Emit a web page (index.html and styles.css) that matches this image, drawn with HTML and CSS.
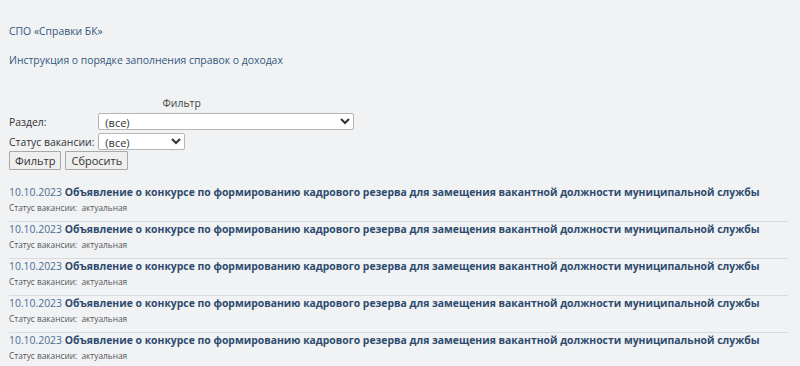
FILE: index.html
```html
<!DOCTYPE html>
<html lang="ru">
<head>
    <meta charset="UTF-8">
    <title>Вакансии</title>
    <link rel="stylesheet" href="styles.css">
</head>
<body>
    <p class="crumb">СПО «Справки БК»</p>
    <p class="crumb">Инструкция о порядке заполнения справок о доходах</p>

    <form class="filter">
        <table>
            <caption>Фильтр</caption>
            <tr>
                <td class="lbl">Раздел:</td>
                <td><select class="wide"><option>(все)</option></select></td>
            </tr>
            <tr class="last">
                <td class="lbl">Статус вакансии:</td>
                <td><select class="narrow"><option>(все)</option></select></td>
            </tr>
        </table>
        <div class="buttons">
            <button type="button">Фильтр</button>
            <button type="button">Сбросить</button>
        </div>
    </form>

    <div class="news">
        <div class="item">
            <div class="head"><span class="date">10.10.2023</span> <a class="title">Объявление о конкурсе по формированию кадрового резерва для замещения вакантной должности муниципальной службы</a></div>
            <div class="status">Статус вакансии:&nbsp; актуальная</div>
        </div>
        <div class="item">
            <div class="head"><span class="date">10.10.2023</span> <a class="title">Объявление о конкурсе по формированию кадрового резерва для замещения вакантной должности муниципальной службы</a></div>
            <div class="status">Статус вакансии:&nbsp; актуальная</div>
        </div>
        <div class="item">
            <div class="head"><span class="date">10.10.2023</span> <a class="title">Объявление о конкурсе по формированию кадрового резерва для замещения вакантной должности муниципальной службы</a></div>
            <div class="status">Статус вакансии:&nbsp; актуальная</div>
        </div>
        <div class="item">
            <div class="head"><span class="date">10.10.2023</span> <a class="title">Объявление о конкурсе по формированию кадрового резерва для замещения вакантной должности муниципальной службы</a></div>
            <div class="status">Статус вакансии:&nbsp; актуальная</div>
        </div>
        <div class="item">
            <div class="head"><span class="date">10.10.2023</span> <a class="title">Объявление о конкурсе по формированию кадрового резерва для замещения вакантной должности муниципальной службы</a></div>
            <div class="status">Статус вакансии:&nbsp; актуальная</div>
        </div>
    </div>
</body>
</html>
```

FILE: styles.css
```css
body {
    margin: 0;
    padding: 24px 9px 0 9px;
    background: #f0f2f4;
    font-family: "Open Sans", Arial, sans-serif;
    font-size: 10.4px;
    color: #333;
}

.crumb {
    margin: 0 0 15px 0;
    line-height: 14px;
    color: #34577d;
}

.filter {
    margin-top: 29px;
}

.filter table {
    border-collapse: collapse;
}

.filter caption {
    color: #444;
    line-height: 14px;
    padding-bottom: 3px;
}

.filter td {
    padding: 0 0 3px 0;
    color: #333;
}

.filter .last td {
    padding-bottom: 1px;
}

.filter .lbl {
    padding-right: 4px;
    white-space: nowrap;
}

select {
    font-family: "Open Sans", Arial, sans-serif;
    font-size: 11px;
    height: 17px;
    padding: 0 2px;
    background: #fff;
    border: 1px solid #b5b5b5;
    border-radius: 2px;
    color: #333;
}

.wide {
    width: 256px;
}

.narrow {
    width: 87px;
}

.buttons {
    display: flex;
    gap: 4px;
}

button {
    font-family: "Open Sans", Arial, sans-serif;
    font-size: 11px;
    color: #333;
    height: 19px;
    padding: 0 5px;
    background: #efefef;
    border: 1px solid #a8a8a8;
    border-radius: 1px;
}

.news {
    margin-top: 15px;
}

.item {
    padding: 0 0 8px 0;
    border-bottom: 1px solid #d8dadd;
    margin-right: 3px;
}

.item:last-child {
    border-bottom: none;
}

.head {
    line-height: 14px;
    white-space: nowrap;
}

.date {
    color: #4a6d96;
}

.title {
    font-weight: bold;
    color: #2e4b6e;
}

.status {
    font-size: 8.3px;
    line-height: 10px;
    color: #555;
    margin-top: 4px;
}
```
